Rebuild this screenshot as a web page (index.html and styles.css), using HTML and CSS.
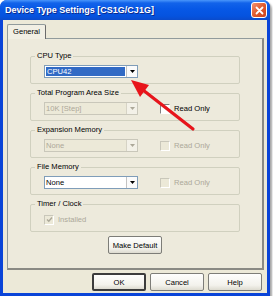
FILE: index.html
```html
<!DOCTYPE html>
<html lang="en">
<head>
    <meta charset="UTF-8">
    <title>Device Type Settings</title>
    <link rel="stylesheet" href="styles.css">
</head>
<body>
    <div class="window">
        <div class="titlebar">
            <span class="title">Device Type Settings [CS1G/CJ1G]</span>
            <span class="close-btn">
                <svg width="9" height="9" viewBox="0 0 9 9"><path d="M1.5 1.5 L7.5 7.5 M7.5 1.5 L1.5 7.5" stroke="#fff" stroke-width="1.8" stroke-linecap="round"/></svg>
            </span>
        </div>

        <div class="client">
            <div class="tabs">
                <div class="tab">General</div>
            </div>

            <div class="panel">
                <fieldset class="group">
                    <legend>CPU Type</legend>
                    <div class="row">
                        <div class="combo">
                            <span class="combo-text"><span class="selected">CPU42</span></span>
                            <span class="combo-btn"><svg width="5" height="3" viewBox="0 0 5 3"><polygon points="0,0 5,0 2.5,3" fill="#000"/></svg></span>
                        </div>
                    </div>
                </fieldset>

                <fieldset class="group">
                    <legend>Total Program Area Size</legend>
                    <div class="row">
                        <div class="combo disabled">
                            <span class="combo-text">10K [Step]</span>
                            <span class="combo-btn"><svg width="5" height="3" viewBox="0 0 5 3"><polygon points="0,0 5,0 2.5,3" fill="#aca899"/></svg></span>
                        </div>
                        <label class="check"><span class="box"></span>Read Only</label>
                    </div>
                </fieldset>

                <fieldset class="group">
                    <legend>Expansion Memory</legend>
                    <div class="row">
                        <div class="combo disabled">
                            <span class="combo-text">None</span>
                            <span class="combo-btn"><svg width="5" height="3" viewBox="0 0 5 3"><polygon points="0,0 5,0 2.5,3" fill="#aca899"/></svg></span>
                        </div>
                        <label class="check disabled"><span class="box"></span>Read Only</label>
                    </div>
                </fieldset>

                <fieldset class="group">
                    <legend>File Memory</legend>
                    <div class="row">
                        <div class="combo">
                            <span class="combo-text">None</span>
                            <span class="combo-btn"><svg width="5" height="3" viewBox="0 0 5 3"><polygon points="0,0 5,0 2.5,3" fill="#000"/></svg></span>
                        </div>
                        <label class="check disabled"><span class="box"></span>Read Only</label>
                    </div>
                </fieldset>

                <fieldset class="group">
                    <legend>Timer / Clock</legend>
                    <div class="row">
                        <label class="check disabled installed">
                            <span class="box"><svg width="7" height="7" viewBox="0 0 7 7"><path d="M1 3.5 L2.8 5.3 L6 1.5" stroke="#aca899" stroke-width="1.4" fill="none"/></svg></span>Installed
                        </label>
                    </div>
                </fieldset>

                <div class="panel-actions">
                    <button class="btn">Make Default</button>
                </div>
            </div>

            <div class="dialog-buttons">
                <button class="btn default">OK</button>
                <button class="btn">Cancel</button>
                <button class="btn">Help</button>
            </div>
        </div>

        <!-- callout arrow pointing at the CPU combo -->
        <svg class="arrow" width="273" height="301" viewBox="0 0 273 301">
            <line x1="143" y1="90" x2="193" y2="129" stroke="#9a6a6a" stroke-opacity="0.35" stroke-width="3" transform="translate(1,1)"/>
            <line x1="143" y1="90" x2="193" y2="129" stroke="#e8141b" stroke-width="3" stroke-linecap="round"/>
            <polygon points="131,80 149,85 140,97" fill="#e8141b"/>
        </svg>
    </div>
</body>
</html>
```

FILE: styles.css
```css
body {
    margin: 0;
    background: #fff;
    font-family: "Liberation Sans", Arial, sans-serif;
    font-size: 7.6px;
    color: #000;
}
.window {
    position: relative;
    width: 270px;
    height: 296px;
    box-sizing: border-box;
    padding: 0 3px 3px;
    display: flex;
    flex-direction: column;
    background: #0a44d8;
    border-radius: 7px 7px 0 0;
    box-shadow: 2px 2px 2px rgba(0, 0, 0, 0.35);
}
.titlebar {
    height: 20px;
    margin: 0 -3px;
    padding: 0 3px 0 5px;
    display: flex;
    align-items: center;
    justify-content: space-between;
    border-radius: 7px 7px 0 0;
    background: linear-gradient(#4a96fb 0, #1263ea 3px, #0758e6 9px, #0553df 16px, #0a4bcc 20px);
    color: #fff;
    font-weight: bold;
    font-size: 9px;
    text-shadow: 1px 1px 0 #0b2a8c;
}
.close-btn {
    width: 16px;
    height: 16px;
    box-sizing: border-box;
    border: 1px solid #fff;
    border-radius: 3px;
    background: linear-gradient(135deg, #f29372, #e05a2e 50%, #c9441f);
    display: flex;
    align-items: center;
    justify-content: center;
}
.client {
    flex: 1;
    background: #ece9d8;
    padding: 4px 3px 2px 4px;
    display: flex;
    flex-direction: column;
}
.tabs {
    display: flex;
}
.tab {
    position: relative;
    z-index: 1;
    height: 15px;
    box-sizing: border-box;
    margin-bottom: -1px;
    padding: 2px 5px 0;
    border: 1px solid #919b9c;
    border-right-color: #6b6b6b;
    border-bottom: none;
    border-radius: 2px 2px 0 0;
    background: #f1efe4;
}
.panel {
    width: 257px;
    height: 232px;
    box-sizing: border-box;
    padding: 12px 0 0 22px;
    border: 1px solid #919b9c;
    border-right: 2px solid #8a8a84;
    border-bottom: 2px solid #8a8a84;
    background: #edeadc;
    display: flex;
    flex-direction: column;
    gap: 4px;
}
.group {
    width: 210px;
    min-width: 0;
    box-sizing: border-box;
    margin: 0;
    padding: 0;
    border: 1px solid #d0d0bf;
    border-radius: 2px;
}
.group legend {
    margin-left: 4px;
    padding: 0 2px;
    line-height: 10px;
}
.row {
    height: 13px;
    padding: 4px 0 5px 13px;
    display: flex;
    align-items: center;
}
.combo {
    width: 94px;
    height: 13px;
    box-sizing: border-box;
    border: 1px solid #7f9db9;
    background: #fff;
    display: flex;
}
.combo-text {
    flex: 1;
    padding: 1px;
    display: flex;
    align-items: center;
    line-height: 9px;
}
.combo-text .selected {
    flex: 1;
    align-self: stretch;
    padding-left: 1px;
    background: #316ac5;
    color: #fff;
}
.combo-btn {
    width: 10px;
    border-left: 1px solid #c3c3c3;
    background: #fbfbfb;
    display: flex;
    align-items: center;
    justify-content: center;
}
.combo.disabled {
    border-color: #c9c7ba;
    background: #ece9d8;
    color: #aca899;
}
.combo.disabled .combo-btn {
    border-left-color: #d6d3c5;
    background: #f3f1e8;
}
.check {
    margin-left: 22px;
    display: flex;
    align-items: center;
    gap: 4px;
}
.check .box {
    width: 10px;
    height: 10px;
    box-sizing: border-box;
    border: 1px solid #fff;
    border-top-color: #808080;
    border-left-color: #808080;
    background: #fff;
    display: flex;
    align-items: center;
    justify-content: center;
}
.check.disabled {
    color: #aca899;
}
.check.disabled .box {
    border-color: #c9c7ba;
    border-bottom-color: #fff;
    border-right-color: #fff;
    background: #ece9d8;
}
.check.installed {
    margin-left: 0;
}
.panel-actions {
    width: 210px;
    display: flex;
    justify-content: center;
}
.btn {
    width: 54px;
    height: 18px;
    padding: 0;
    font-family: inherit;
    font-size: 7.6px;
    color: #000;
    border: 1px solid #7d7d78;
    border-radius: 2px;
    background: linear-gradient(#fefefd, #f3f2ec 70%, #dddbd0);
}
.btn.default {
    border: 2px solid #3c3c3c;
}
.dialog-buttons {
    margin-top: 3px;
    padding-right: 2px;
    display: flex;
    justify-content: flex-end;
    gap: 4px;
}
.arrow {
    position: absolute;
    top: 0;
    left: 0;
    pointer-events: none;
}
```
